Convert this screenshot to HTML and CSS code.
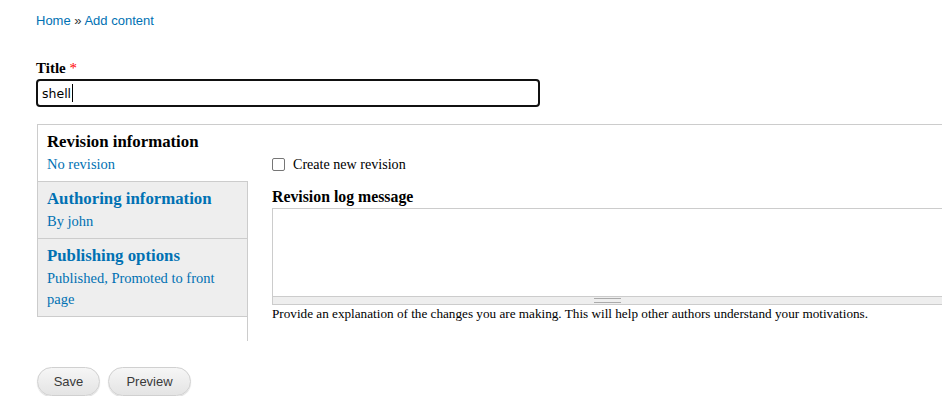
FILE: index.html
```html
<!DOCTYPE html>
<html>
<head>
<meta charset="utf-8">
<link rel="stylesheet" href="styles.css">
</head>
<body>
<div class="page">
  <nav class="breadcrumb"><a href="#">Home</a> » <a href="#">Add content</a></nav>
  <div class="field">
    <label class="label">Title <span class="req">*</span></label>
    <div class="input"><span class="val">shell</span><span class="caret"></span></div>
  </div>
  <div class="vtabs">
    <ul class="menu">
      <li class="tab active"><strong>Revision information</strong><span class="sum">No revision</span></li>
      <li class="tab"><strong>Authoring information</strong><span class="sum">By john</span></li>
      <li class="tab"><strong>Publishing options</strong><span class="sum">Published, Promoted to front page</span></li>
    </ul>
    <div class="pane">
      <div class="check"><span class="box"></span><span>Create new revision</span></div>
      <div class="label2">Revision log message</div>
      <div class="textarea"></div>
      <div class="grip"><span class="lines"></span></div>
      <div class="desc">Provide an explanation of the changes you are making. This will help other authors understand your motivations.</div>
    </div>
  </div>
  <div class="actions">
    <button class="btn">Save</button>
    <button class="btn">Preview</button>
  </div>
</div>
</body>
</html>
```
FILE: styles.css
```css
html, body { margin: 0; padding: 0; background: #fff; }
body { font-family: "Liberation Serif", "Times New Roman", serif; color: #3b3b3b; }
.page { padding-left: 36px; }
.breadcrumb { padding-top: 13px; height: 20px; font-family: "Liberation Sans", Arial, sans-serif; font-size: 13px; line-height: 16px; color: #333; }
.breadcrumb a { color: #0071b3; text-decoration: none; }
.field { margin-top: 26px; }
.label { display: block; font-weight: bold; font-size: 15px; line-height: 18px; color: #000; margin-bottom: 2px; }
.req { color: #f00; font-weight: normal; }
.input { box-sizing: border-box; width: 504px; height: 28px; border: 2px solid #111; border-radius: 4px; display: flex; align-items: center; padding-left: 4px; font-family: "DejaVu Sans", Verdana, sans-serif; font-size: 12.5px; color: #000; }
.caret { width: 1px; height: 18px; background: #000; margin-left: 1px; }
.vtabs { margin-top: 17px; margin-left: 1px; display: flex; border-top: 1px solid #ccc; height: 216px; }
.menu { list-style: none; margin: 0; padding: 0; width: 210px; flex: none; border-right: 1px solid #ccc; }
.tab { box-sizing: border-box; background: #eee; border-left: 1px solid #ccc; border-bottom: 1px solid #ccc; padding: 8px 9px 9px; font-size: 14.5px; line-height: 21px; color: #0071b3; height: 57px; }
.tab:last-child { height: 78px; }
.tab strong { display: block; font-size: 16.8px; line-height: 18px; margin-bottom: 3px; }
.tab .sum { display: block; }
.tab.active { background: #fff; color: #0071b3; margin-right: -1px; }
.tab.active strong { color: #000; }
.pane { flex: 1; padding-left: 24px; padding-top: 29px; }
.check { display: flex; align-items: center; font-size: 14.1px; color: #000; height: 20px; }
.box { box-sizing: border-box; width: 13px; height: 13px; border: 1px solid #767676; border-radius: 2px; margin-right: 8px; background: #fff; }
.label2 { margin-top: 14px; font-weight: bold; font-size: 15.8px; line-height: 18px; color: #000; }
.textarea { margin-top: 2px; box-sizing: border-box; height: 88px; border: 1px solid #ccc; border-right: 0; border-bottom: 0; }
.grip { box-sizing: border-box; height: 9px; background: #eee; border: 1px solid #ccc; border-right: 0; display: flex; justify-content: center; align-items: center; }
.lines { width: 27px; height: 3px; border-top: 1px solid #aaa; border-bottom: 1px solid #aaa; }
.desc { margin-top: 1px; font-size: 13.2px; line-height: 15px; color: #000; }
.actions { margin-top: 26px; margin-left: 1px; display: flex; gap: 8px; }
.btn { font-family: "Liberation Sans", Arial, sans-serif; font-size: 13px; color: #3a3a3a; height: 29px; padding: 0; border: 1px solid #d0d0d0; border-radius: 15px; background: linear-gradient(#f6f6f6, #e4e4e4); box-shadow: 0 1px 1px rgba(0,0,0,0.15); }
.btn:first-child { width: 63px; }
.btn:last-child { width: 83px; }
```
